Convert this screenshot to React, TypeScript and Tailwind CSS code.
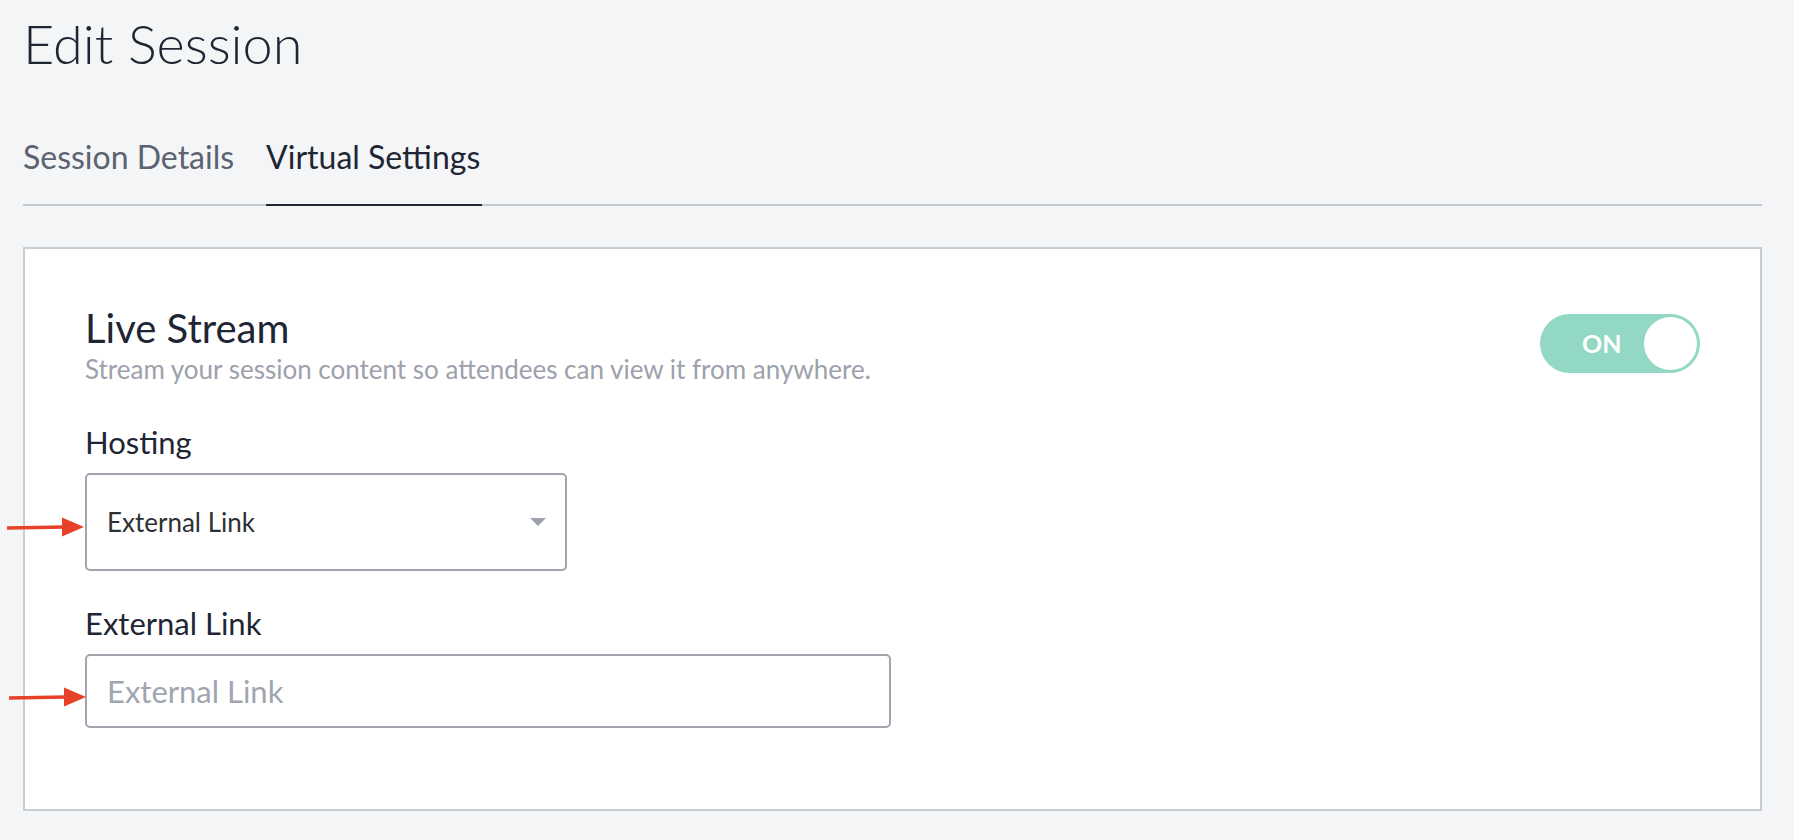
import { useState } from "react";

type FieldProps = {
  label: string;
  children: React.ReactNode;
};

function Field({ label, children }: FieldProps) {
  return (
    <div>
      <p className="text-[31px] leading-[31px] text-[#1f2633]">{label}</p>
      <div className="mt-[15px]">{children}</div>
    </div>
  );
}

function Toggle({ on, onChange }: { on: boolean; onChange: (v: boolean) => void }) {
  return (
    <button
      type="button"
      onClick={() => onChange(!on)}
      className="mt-[6px] flex h-[59px] w-[160px] shrink-0 items-center rounded-full bg-[#92d8c4] p-[3px]"
      aria-label="Live stream"
    >
      <span className="flex-1 pl-[39px] text-left text-[25px] font-bold leading-none text-white">
        {on ? "ON" : "OFF"}
      </span>
      <span className="h-[53px] w-[53px] rounded-full bg-white" />
    </button>
  );
}

function Arrow({ className }: { className: string }) {
  return (
    <svg className={className} width="80" height="22" viewBox="0 0 80 22" aria-hidden="true">
      <line x1="1" y1="12" x2="58" y2="11" stroke="#e8412a" strokeWidth="3.5" />
      <polygon points="56,1.5 78,11 56,20.5" fill="#e8412a" />
    </svg>
  );
}

export default function App() {
  const [live, setLive] = useState(true);

  return (
    <div className="relative h-[840px] overflow-hidden bg-[#f4f5f7] pl-[23px] pr-[32px] pt-[17px] font-['Lato',_sans-serif]">
      <h1 className="text-[54px] font-light leading-[54px] text-[#1f2633]">Edit Session</h1>

      <nav className="mt-[70px] flex gap-[32px] border-b-2 border-[#c5c9ce]">
        <button type="button" className="pb-[31px] text-[32px] leading-[32px] text-[#5b6270]">
          Session Details
        </button>
        <button
          type="button"
          className="-mb-[2px] border-b-2 border-[#1f2633] pb-[31px] pr-[2px] text-[32px] leading-[32px] text-[#1f2633]"
        >
          Virtual Settings
        </button>
      </nav>

      <section className="mt-[41px] border-2 border-[#c9cdd2] bg-white px-[60px] pb-[81px] pt-[59px]">
        <div className="flex items-start justify-between">
          <div>
            <h2 className="text-[40px] leading-[40px] text-[#1f2633]">Live Stream</h2>
            <p className="mt-[8px] text-[26px] leading-[26px] text-[#9ca1ab]">
              Stream your session content so attendees can view it from anywhere.
            </p>
          </div>
          <Toggle on={live} onChange={setLive} />
        </div>

        <div className="mt-[45px]">
          <Field label="Hosting">
            <div className="flex h-[98px] w-[482px] items-center justify-between rounded-[5px] border-2 border-[#a0a5af] pl-[20px] pr-[19px]">
              <span className="text-[26px] text-[#2e3033]">External Link</span>
              <svg width="16" height="8" viewBox="0 0 16 8" aria-hidden="true">
                <polygon points="0,0 16,0 8,8" fill="#9ca2ad" />
              </svg>
            </div>
          </Field>
        </div>

        <div className="mt-[37px]">
          <Field label="External Link">
            <input
              type="text"
              placeholder="External Link"
              className="block h-[74px] w-[806px] rounded-[5px] border-2 border-[#a0a5af] px-[20px] text-[31px] text-[#2e3033] outline-none placeholder:text-[#a0a5b0]"
            />
          </Field>
        </div>
      </section>

      <Arrow className="absolute left-[6px] top-[516px]" />
      <Arrow className="absolute left-[8px] top-[686px]" />
    </div>
  );
}
